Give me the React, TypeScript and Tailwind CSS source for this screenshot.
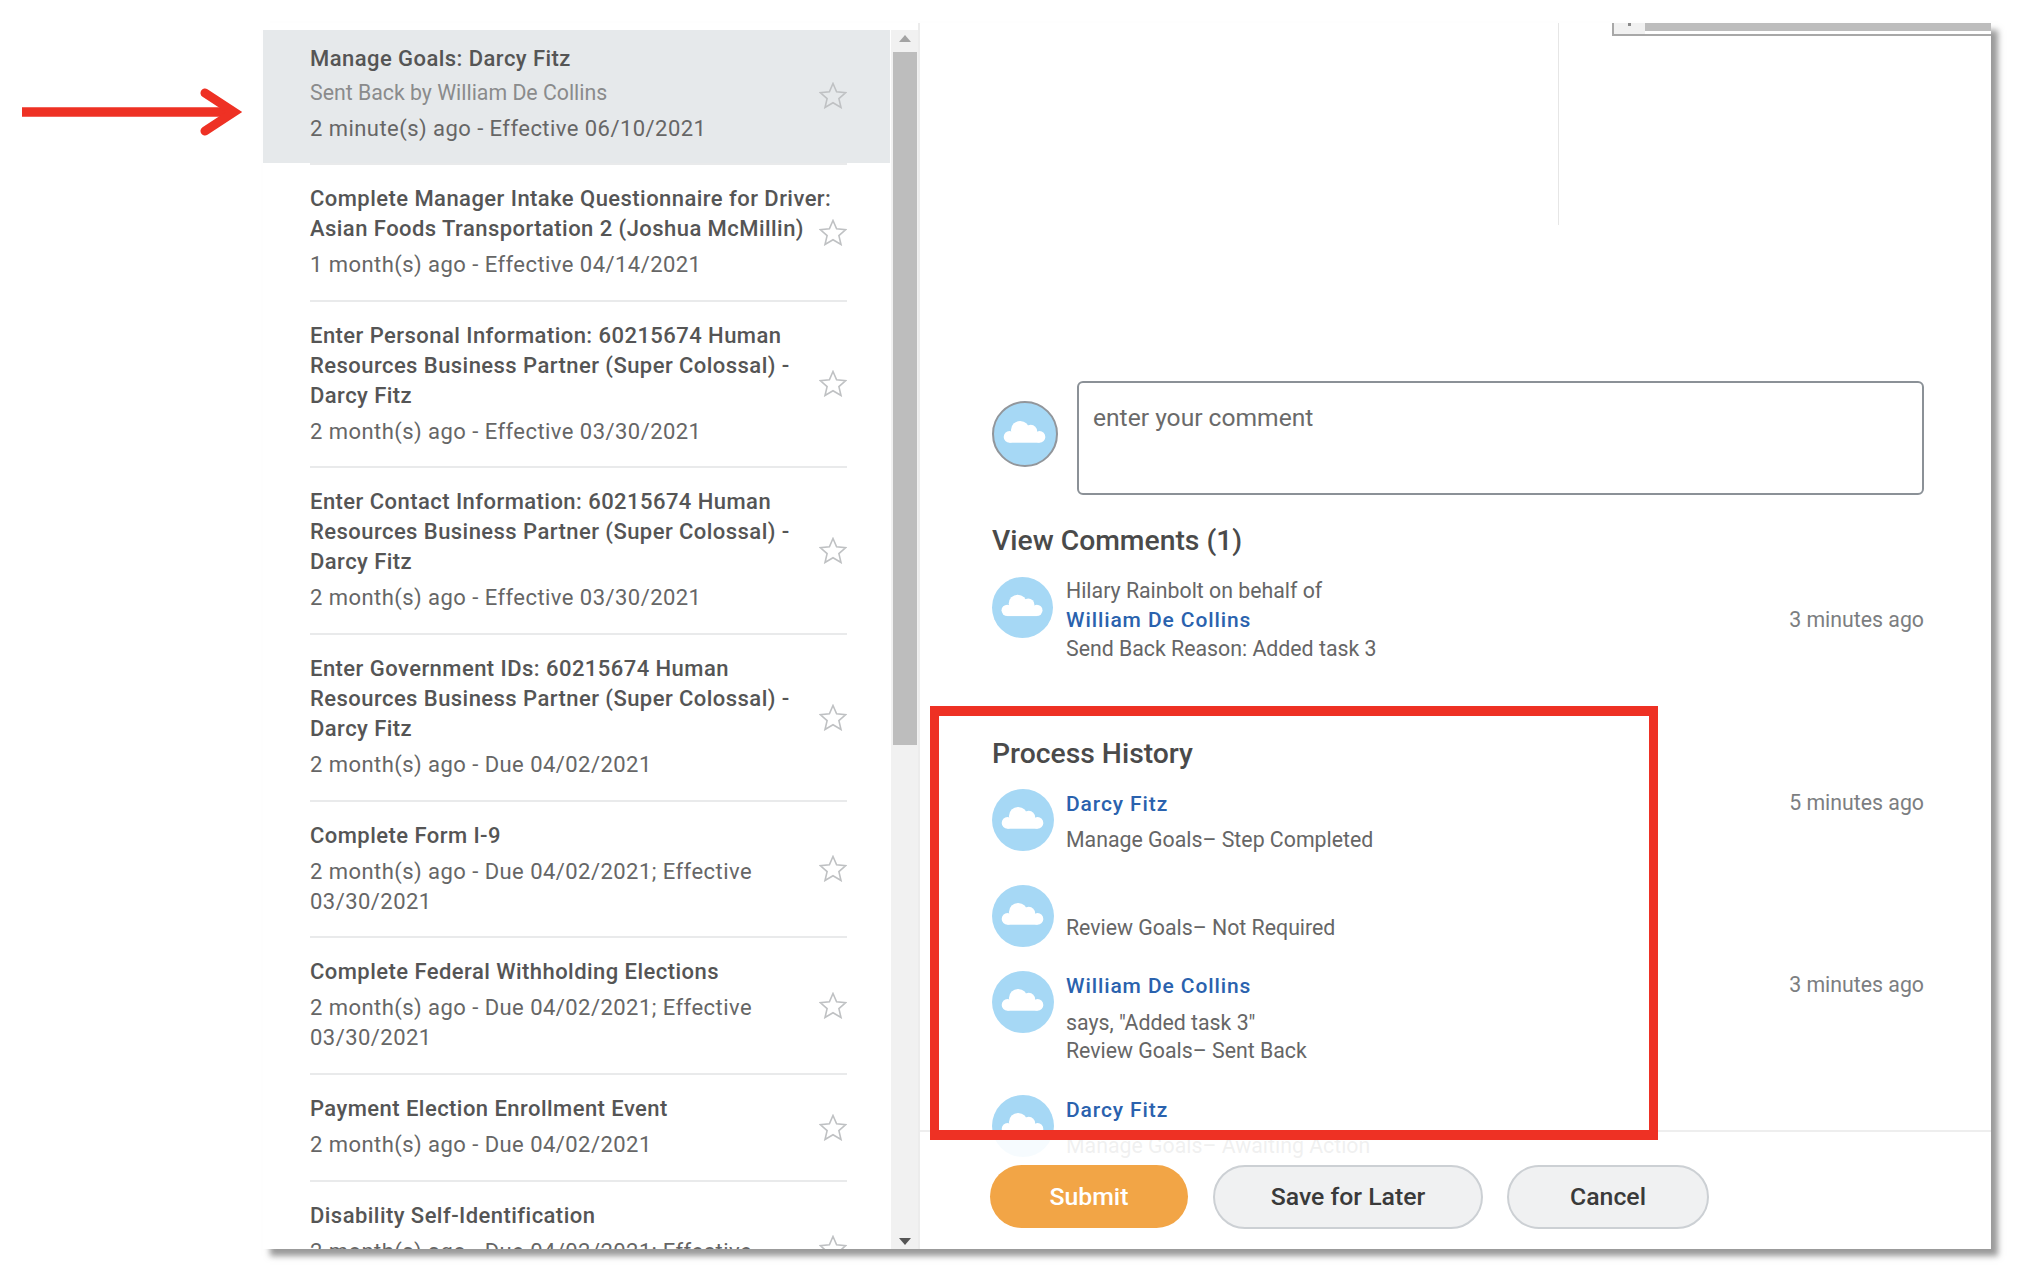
const tasks = [
  { title: ['Complete Manager Intake Questionnaire for Driver:', 'Asian Foods Transportation 2 (Joshua McMillin)'], meta: ['1 month(s) ago - Effective 04/14/2021'] },
  { title: ['Enter Personal Information: 60215674 Human', 'Resources Business Partner (Super Colossal) -', 'Darcy Fitz'], meta: ['2 month(s) ago - Effective 03/30/2021'] },
  { title: ['Enter Contact Information: 60215674 Human', 'Resources Business Partner (Super Colossal) -', 'Darcy Fitz'], meta: ['2 month(s) ago - Effective 03/30/2021'] },
  { title: ['Enter Government IDs: 60215674 Human', 'Resources Business Partner (Super Colossal) -', 'Darcy Fitz'], meta: ['2 month(s) ago - Due 04/02/2021'] },
  { title: ['Complete Form I-9'], meta: ['2 month(s) ago - Due 04/02/2021; Effective', '03/30/2021'] },
  { title: ['Complete Federal Withholding Elections'], meta: ['2 month(s) ago - Due 04/02/2021; Effective', '03/30/2021'] },
  { title: ['Payment Election Enrollment Event'], meta: ['2 month(s) ago - Due 04/02/2021'] },
  { title: ['Disability Self-Identification'], meta: ['2 month(s) ago - Due 04/02/2021; Effective', '03/30/2021'] },
];

function Star() {
  return (
    <svg className="h-[27px] w-[28px] shrink-0" viewBox="0 0 28 27" fill="none" stroke="#bfc1c3" strokeWidth="1.6">
      <polygon points="14,1.5 17.6,9.8 26.8,10.6 19.9,16.6 22,25.5 14,20.8 6,25.5 8.1,16.6 1.2,10.6 10.4,9.8" />
    </svg>
  );
}

function Avatar({ size, ring = false }: { size: string; ring?: boolean }) {
  return (
    <div className={`${size} shrink-0 overflow-hidden rounded-full bg-[#a6d8f5] ${ring ? 'border-2 border-[#92969b]' : ''}`}>
      <svg className="h-full w-full" viewBox="0 0 64 64" fill="#fff">
        <circle cx="16" cy="35" r="6" />
        <circle cx="27" cy="28" r="9.5" />
        <circle cx="38" cy="29" r="6.5" />
        <circle cx="47" cy="35" r="6" />
        <rect x="16" y="33" width="31" height="8" />
      </svg>
    </div>
  );
}

function TaskRow({ title, meta }: { title: string[]; meta: string[] }) {
  return (
    <div className="mr-[44px] ml-[47px] flex items-center justify-between border-t-2 border-[#e9eaeb] pt-[19px] pb-[19.7px] first:border-t-0 first:pt-[21.5px]">
      <div className="min-w-0">
        <div className="mb-[6px] text-[22px] leading-[30px] font-medium tracking-[0.45px] whitespace-nowrap text-[#555]">
          {title.map((line) => (
            <div key={line}>{line}</div>
          ))}
        </div>
        <div className="text-[22px] leading-[30px] tracking-[0.45px] whitespace-nowrap text-[#666]">
          {meta.map((line) => (
            <div key={line}>{line}</div>
          ))}
        </div>
      </div>
      <Star />
    </div>
  );
}

function HistoryRow({ name, lines, time, height, nameGap = 'mt-[7px]' }: { name?: string; lines: string[]; time?: string; height: string; nameGap?: string }) {
  return (
    <div className={`flex ${height}`}>
      <Avatar size="h-[62px] w-[62px]" />
      <div className="ml-[12px] flex-1">
        {name && <div className="text-[21px] leading-[30px] font-medium tracking-[0.9px] text-[#2a62ae]">{name}</div>}
        <div className={`${nameGap} text-[21.3px] leading-[28px] text-[#666]`}>
          {lines.map((line) => (
            <div key={line}>{line}</div>
          ))}
        </div>
      </div>
      {time && <div className="-mt-[1px] text-[21.3px] leading-[30px] text-[#7c7e81]">{time}</div>}
    </div>
  );
}

export default function App() {
  return (
    <div className="relative h-[1280px] overflow-hidden bg-white pt-[23px] pl-[263px] font-['Roboto',sans-serif]">
      <svg className="absolute top-[88px] left-[22px] h-[48px] w-[222px]" viewBox="0 0 222 48" fill="none" stroke="#ee3124">
        <path d="M0 24 H212" strokeWidth="9.5" />
        <path d="M183 5 L212 24 L183 43" strokeWidth="9" strokeLinecap="round" />
      </svg>

      <div className="flex h-[1226px] w-[1728px] bg-white shadow-[7px_7px_6px_rgba(120,120,120,0.75)]">
        <div className="relative flex w-[657px] shrink-0 border-r-2 border-[#ececec]">
          <div className="h-full w-[628px] overflow-hidden pt-[7px]">
            <div className="mr-[1px] flex h-[133px] items-center justify-between bg-[#e6e9eb] pr-[43px] pl-[47px]">
              <div className="pb-[6px]">
                <div className="text-[22px] leading-[30px] font-medium tracking-[0.45px] text-[#555]">Manage Goals: Darcy Fitz</div>
                <div className="mt-[4px] text-[21.3px] leading-[30px] text-[#8a8b8c]">Sent Back by William De Collins</div>
                <div className="mt-[6px] text-[22px] leading-[30px] tracking-[0.45px] text-[#666]">2 minute(s) ago - Effective 06/10/2021</div>
              </div>
              <div className="pb-[3px]">
                <Star />
              </div>
            </div>
            {tasks.map((task) => (
              <TaskRow key={task.title.join()} title={task.title} meta={task.meta} />
            ))}
          </div>
          <div className="mt-[7px] flex w-[27px] flex-col items-center bg-[#f1f1f1] pt-[5px] pb-[4px]">
            <div className="h-0 w-0 border-x-[6px] border-b-[7px] border-x-transparent border-b-[#a3a3a3]" />
            <div className="mt-[10px] h-[693px] w-[24px] bg-[#bdbdbd]" />
            <div className="mt-auto h-0 w-0 border-x-[6px] border-t-[7px] border-x-transparent border-t-[#555]" />
          </div>
        </div>

        <div className="relative flex min-w-0 flex-1 flex-col overflow-hidden">
          <div className="flex h-[202px]">
            <div className="h-full w-[639px] shrink-0 border-r border-[#e6e6e6]" />
            <div className="ml-[53px] flex h-[13px] flex-1 border-b-2 border-l-2 border-[#a8a8a8]">
              <div className="flex w-[31px] justify-center bg-[#f1f1f1]">
                <div className="h-[3px] w-[3px] bg-[#8a8a8a]" />
              </div>
              <div className="mb-[3px] flex-1 bg-[#bdbdbd]" />
            </div>
          </div>

          <div className="mt-[156px] flex pr-[67px] pl-[72px]">
            <div className="mt-[20px]">
              <Avatar size="h-[66px] w-[66px]" ring />
            </div>
            <div className="ml-[19px] h-[114px] flex-1 rounded-[6px] border-2 border-[#8b9197] px-[14px] py-[19px] text-[24.6px] leading-[32px] text-[#6a6a6a]">
              enter your comment
            </div>
          </div>

          <div className="mt-[27px] pr-[67px] pl-[72px]">
            <div className="text-[28.3px] leading-[38px] font-medium text-[#4a4a4a]">View Comments (1)</div>
            <div className="mt-[17px] flex items-start">
              <Avatar size="h-[61px] w-[61px]" />
              <div className="-mt-[1px] ml-[13px] flex-1 text-[21.3px] text-[#666]">
                <div className="leading-[30px]">Hilary Rainbolt on behalf of</div>
                <div className="text-[21px] leading-[29px] font-medium tracking-[0.9px] text-[#2a62ae]">William De Collins</div>
                <div className="leading-[28px]">Send Back Reason: Added task 3</div>
              </div>
              <div className="mt-[27px] text-[21.3px] text-[#7c7e81]">3 minutes ago</div>
            </div>
          </div>

          <div className="mt-[72px] pr-[67px] pl-[72px]">
            <div className="text-[28.3px] leading-[38px] font-medium text-[#4a4a4a]">Process History</div>
            <div className="mt-[16px]">
              <HistoryRow name="Darcy Fitz" lines={['Manage Goals– Step Completed']} time="5 minutes ago" height="h-[96px]" />
              <HistoryRow lines={['Review Goals– Not Required']} height="h-[86px]" nameGap="mt-[29px]" />
              <HistoryRow name="William De Collins" lines={['says, "Added task 3"', 'Review Goals– Sent Back']} time="3 minutes ago" height="h-[124px]" nameGap="mt-[8px]" />
              <HistoryRow name="Darcy Fitz" lines={['Manage Goals– Awaiting Action']} height="h-[80px]" />
            </div>
          </div>

          <div className="absolute inset-x-0 top-[1107px] bottom-0 flex items-start gap-[24px] border-t-2 border-[#eeeeee] bg-white/90 pt-[33px] pl-[70px]">
            <div className="flex h-[63px] w-[198px] items-center justify-center rounded-full bg-[#f2a546] text-[24.8px] font-medium text-white">Submit</div>
            <div className="ml-[1px] flex h-[64px] w-[270px] items-center justify-center rounded-full border-2 border-[#ccd0d4] bg-[#f0f1f2] text-[24.8px] font-medium text-[#3a3a3a]">Save for Later</div>
            <div className="flex h-[64px] w-[202px] items-center justify-center rounded-full border-2 border-[#ccd0d4] bg-[#f0f1f2] text-[24.8px] font-medium text-[#3a3a3a]">Cancel</div>
          </div>
        </div>
      </div>

      <div className="absolute top-[706px] left-[930px] h-[434px] w-[728px] border-x-[9px] border-y-[10px] border-[#ee3124]" />
    </div>
  );
}
